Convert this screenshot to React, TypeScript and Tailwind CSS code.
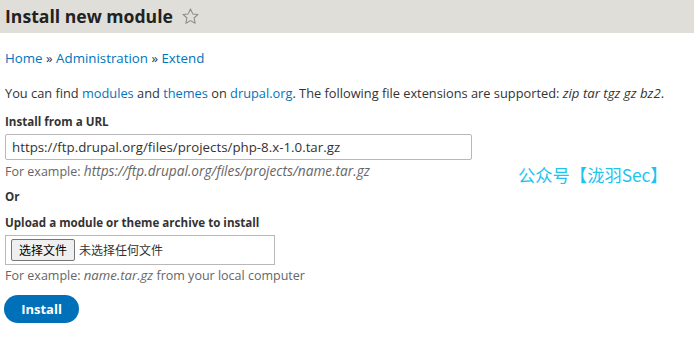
import React from 'react';

const App: React.FC = () => {
  return (
    <div className="w-[694px] h-[350px] bg-white overflow-hidden relative text-[#333] font-['Open_Sans',sans-serif] text-[12.8px] leading-[16px]">
      <div className="h-[33px] bg-[#e0ded9] flex items-center pl-[5px]">
        <h1 className="text-[17.6px] font-bold text-[#222] leading-none">Install new module</h1>
        <svg className="ml-[8px] w-[19px] h-[19px]" viewBox="0 0 24 24" fill="none" stroke="#8a8a8a" strokeWidth={1.3} strokeLinejoin="round">
          <path d="M12 2.5l2.9 6.2 6.6.7-5 4.5 1.4 6.6L12 17.2l-5.9 3.3 1.4-6.6-5-4.5 6.6-.7z" />
        </svg>
      </div>

      <div className="px-[5px]">
        <div className="mt-[17px] text-[#0074bd] text-[13.3px]">
          Home <span className="text-[#333]">»</span> Administration <span className="text-[#333]">»</span> Extend
        </div>

        <p className="mt-[19px]">
          You can find <span className="text-[#0074bd]">modules</span> and <span className="text-[#0074bd]">themes</span> on{' '}
          <span className="text-[#0074bd]">drupal.org</span>. The following file extensions are supported:{' '}
          <em className="text-[13.2px]">zip tar tgz gz bz2</em>.
        </p>

        <div className="mt-[13px] font-bold text-[11.6px]">Install from a URL</div>
        <div className="mt-[4px] w-[467px] h-[26px] border border-[#b8b8b8] rounded-[2px] flex items-center px-[6px] text-[13.3px] text-[#333]">
          https://ftp.drupal.org/files/projects/php-8.x-1.0.tar.gz
        </div>
        <div className="mt-[3px] text-[#666] text-[12.5px]">
          For example: <em className="text-[13.7px]">https://ftp.drupal.org/files/projects/name.tar.gz</em>
        </div>

        <div className="mt-[9px] font-bold text-[11.6px]">Or</div>

        <div className="mt-[10px] font-bold text-[11.6px]">Upload a module or theme archive to install</div>
        <div className="mt-[4px] w-[270px] h-[30px] border border-[#b8b8b8] flex items-center pl-[5px] gap-[4px] font-['Noto_Sans_CJK_SC',sans-serif] text-[12px]">
          <span className="h-[22px] w-[64px] border border-[#767676] rounded-[2px] bg-[#efefef] flex items-center justify-center text-black">选择文件</span>
          <span className="text-[#333]">未选择任何文件</span>
        </div>
        <div className="mt-[2px] text-[#666] text-[12.5px]">
          For example: <em className="text-[13.2px]">name.tar.gz</em> from your local computer
        </div>

        <button className="mt-[11px] -ml-[1px] w-[75px] h-[28px] rounded-full bg-[#0071b8] text-white font-bold text-[13px] leading-none">Install</button>
      </div>

      <div className="absolute left-[518px] top-[165px] text-[17.3px] leading-[20px] text-[#1ec3ef] font-['Noto_Sans_CJK_SC',sans-serif]">
        公众号【泷羽Sec】
      </div>
    </div>
  );
};

export default App;
